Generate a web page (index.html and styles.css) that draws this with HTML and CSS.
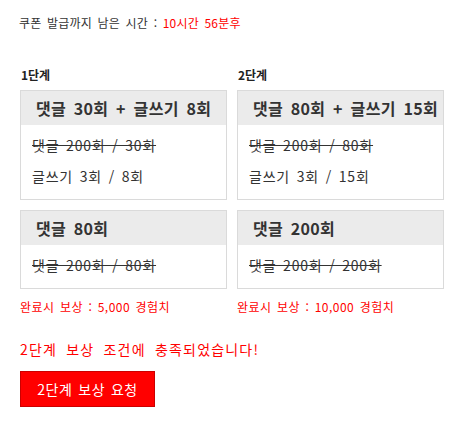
FILE: index.html
```html
<!DOCTYPE html>
<html lang="ko">
<head>
<meta charset="utf-8">
<link rel="stylesheet" href="styles.css">
</head>
<body>
<div class="page">
  <p class="timer">쿠폰 발급까지 남은 시간 : <span class="red">10시간 56분후</span></p>
  <div class="stages">
    <div class="stage">
      <h3 class="stage-title">1단계</h3>
      <div class="box">
        <div class="box-head">댓글 30회 + 글쓰기 8회</div>
        <div class="box-body">
          <div class="row done">댓글 200회 / 30회</div>
          <div class="row">글쓰기 3회 / 8회</div>
        </div>
      </div>
      <div class="box">
        <div class="box-head">댓글 80회</div>
        <div class="box-body">
          <div class="row done">댓글 200회 / 80회</div>
        </div>
      </div>
      <p class="reward">완료시 보상 : 5,000 경험치</p>
    </div>
    <div class="stage">
      <h3 class="stage-title">2단계</h3>
      <div class="box">
        <div class="box-head">댓글 80회 + 글쓰기 15회</div>
        <div class="box-body">
          <div class="row done">댓글 200회 / 80회</div>
          <div class="row">글쓰기 3회 / 15회</div>
        </div>
      </div>
      <div class="box">
        <div class="box-head">댓글 200회</div>
        <div class="box-body">
          <div class="row done">댓글 200회 / 200회</div>
        </div>
      </div>
      <p class="reward">완료시 보상 : 10,000 경험치</p>
    </div>
  </div>
  <p class="notice">2단계 보상 조건에 충족되었습니다!</p>
  <button class="btn" type="button">2단계 보상 요청</button>
</div>
</body>
</html>
```

FILE: styles.css
```css
html, body {
  margin: 0;
  padding: 0;
  background: #fff;
}
body {
  font-family: "Noto Sans CJK KR", "Liberation Sans", sans-serif;
  color: #333;
}
.page {
  padding: 15px 20px 0 19px;
}
.timer {
  margin: 0;
  font-size: 12px;
  line-height: 16px;
  color: #333;
  letter-spacing: 0.2px;
  word-spacing: 2px;
}
.red { color: #f00; }
.stages {
  display: grid;
  grid-template-columns: 207px 207px;
  column-gap: 10px;
  margin-top: 36px;
  margin-left: 1px;
}
.stage-title {
  margin: 0 0 7px 1px;
  font-size: 12px;
  line-height: 16px;
  font-weight: bold;
  color: #222;
}
.box {
  border: 1px solid #dadada;
  margin-bottom: 10px;
}
.box-head {
  background: #ebebeb;
  height: 34px;
  line-height: 34px;
  padding: 0 15px;
  font-size: 16px;
  font-weight: bold;
  color: #333;
  white-space: nowrap;
  letter-spacing: 0.3px;
  word-spacing: 3px;
}
.box-body {
  padding: 5px 11px 7px;
}
.row {
  font-size: 14px;
  line-height: 31px;
  color: #333;
  letter-spacing: 0.8px;
  word-spacing: 2px;
}
.row.done {
  text-decoration: line-through;
}
.reward {
  margin: 6px 0 0 0;
  font-size: 12px;
  line-height: 16px;
  color: #f00;
  letter-spacing: 0.5px;
  word-spacing: 1.5px;
}
.notice {
  margin: 24px 0 0 1px;
  font-size: 14px;
  line-height: 20px;
  color: #f00;
  letter-spacing: 1.2px;
  word-spacing: 4px;
}
.btn {
  margin: 12px 0 0 1px;
  display: block;
  width: 135px;
  height: 36px;
  background: #f00;
  border: 1px solid #c00;
  color: #fff;
  font-family: inherit;
  font-size: 14px;
  letter-spacing: 0.5px;
  word-spacing: 1.5px;
  padding: 0;
  cursor: pointer;
}
```
